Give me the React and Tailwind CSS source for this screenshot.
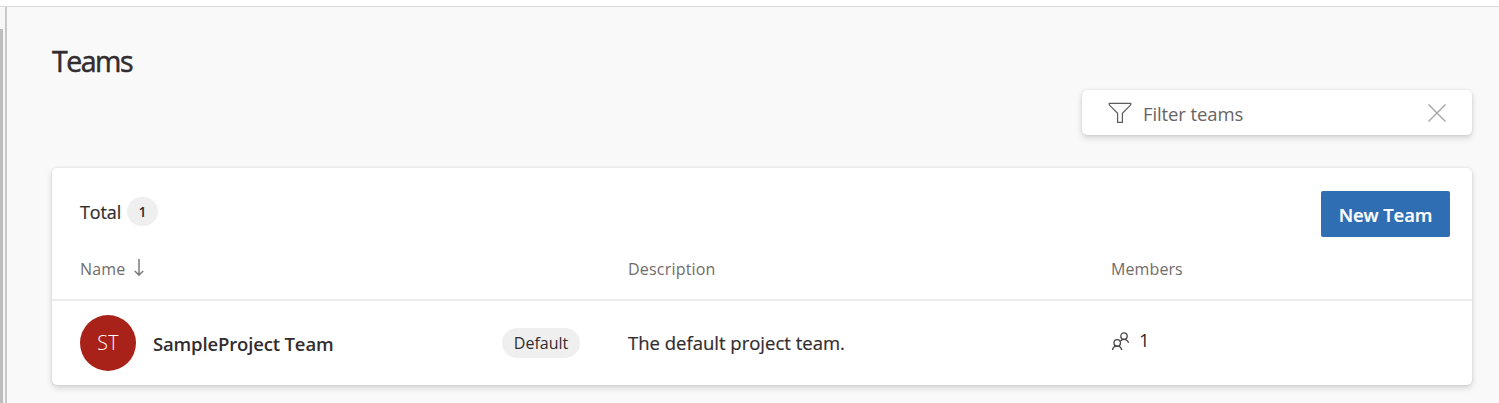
import React from "react";

function FilterIcon() {
  return (
    <svg width="24" height="22" viewBox="0 0 24 22" fill="none" stroke="#605b5b" strokeWidth="1.2" className="shrink-0">
      <path d="M1.2 1.3H22.8V2.8L14.4 11.3V20.4H9.6V11.3L1.2 2.8Z" />
    </svg>
  );
}

function CloseIcon() {
  return (
    <svg width="18" height="18" viewBox="0 0 18 18" fill="none" stroke="#a5a3a3" strokeWidth="1.3" className="shrink-0">
      <path d="M0.5 0.5L17.5 17.5M17.5 0.5L0.5 17.5" />
    </svg>
  );
}

function SortIcon() {
  return (
    <svg width="10" height="17" viewBox="0 0 10 17" fill="none" stroke="#7d7979" strokeWidth="1.5" className="shrink-0">
      <path d="M5 0V16M0.8 12L5 16.1L9.2 12" />
    </svg>
  );
}

function PeopleIcon() {
  return (
    <svg width="19" height="19" viewBox="0 0 19 19" fill="none" stroke="#494545" strokeWidth="1.3" className="shrink-0">
      <circle cx="13" cy="4.1" r="3.2" />
      <path d="M9.3 9.3C10 8 11.3 7.4 13 7.4C15.2 7.4 16.8 8.6 17.6 10.9" />
      <circle cx="6.2" cy="10.9" r="3.2" />
      <path d="M1.4 18C1.9 15.5 3.6 14.1 6.2 14.1C8.6 14.1 10.2 15.5 10.8 18" />
    </svg>
  );
}

export default function App() {
  return (
    <div className="flex h-[403px] w-[1499px] flex-col overflow-hidden bg-[#f9f9f9] font-['Open_Sans','Noto_Sans',sans-serif] text-[#322c2e]">
      <div className="h-[7px] shrink-0 border-b border-[#dadada] bg-white" />
      <div className="flex min-h-0 flex-1">
        <div className="flex w-[7px] shrink-0 border-r-2 border-[#c9c9c9] bg-[#f7f7f7] pt-[22px]">
          <div className="w-[3px] bg-[#bdbdbd]" />
        </div>
        <main className="flex flex-1 flex-col pl-[45px] pr-[27px]">
          <h1 className="mt-[34px] h-10 text-[28.5px] leading-10 tracking-[-1.5px] [-webkit-text-stroke:0.5px_#322c2e]">Teams</h1>
          <div className="mt-[9px] flex h-[45px] w-[390px] shrink-0 items-center self-end rounded-[5px] bg-white pl-[26px] pr-[26px] shadow-[0_3px_6px_rgba(0,0,0,0.15),0_0_3px_rgba(0,0,0,0.1)]">
            <FilterIcon />
            <span className="ml-[11px] mt-[2px] flex-1 text-[18.5px] leading-6 tracking-[-0.1px] text-[#686363]">Filter teams</span>
            <CloseIcon />
          </div>
          <section className="mt-[33px] h-[217px] w-[1420px] shrink-0 rounded-[5px] bg-white shadow-[0_3px_6px_rgba(0,0,0,0.15),0_0_3px_rgba(0,0,0,0.1)]">
            <div className="flex h-[78px] items-start pl-7 pr-[22px]">
              <span className="mt-[32px] w-[47px] whitespace-nowrap text-[18px] leading-6 tracking-[-0.1px] [-webkit-text-stroke:0.2px_#322c2e]">Total</span>
              <span className="mt-[29px] flex h-[29px] w-[31px] items-center justify-center rounded-full bg-[#efefef] text-[14px] font-semibold">1</span>
              <button className="ml-auto mt-[23px] h-[46px] w-[129px] rounded-[2px] bg-[#2f6eb3] pt-[2px] text-[18.5px] font-semibold tracking-[-0.1px] text-white [-webkit-text-stroke:0.2px_white]">New Team</button>
            </div>
            <div className="grid h-[55px] grid-cols-[548px_483px_1fr] border-b-2 border-[#ebebeb] pl-7 pt-[11px] text-[16px] leading-6 text-[#716c6c]">
              <div className="flex items-start gap-[8px]">
                <span className="w-[46px] whitespace-nowrap tracking-[0.15px]">Name</span>
                <span className="mt-[2px]"><SortIcon /></span>
              </div>
              <span className="tracking-[0.2px]">Description</span>
              <span className="tracking-[0.1px]">Members</span>
            </div>
            <div className="grid h-[84px] grid-cols-[548px_483px_1fr] items-center pl-7">
              <div className="flex items-center">
                <span className="flex size-[56px] items-center justify-center rounded-full bg-[#a92219] text-[19.5px] font-light tracking-[0.3px] text-white">ST</span>
                <span className="ml-[17px] mt-[2px] whitespace-nowrap text-[18.5px] font-semibold tracking-[-0.15px]">SampleProject Team</span>
                <span className="ml-auto mr-12 flex h-[30px] w-[78px] items-center justify-center rounded-full bg-[#efefef] text-[16px]">Default</span>
              </div>
              <span className="whitespace-nowrap text-[18.5px] [-webkit-text-stroke:0.2px_#322c2e]">The default project team.</span>
              <div className="flex items-center gap-[9px]">
                <span className="-mt-[3px]"><PeopleIcon /></span>
                <span className="mt-[-7px] text-[18.5px]">1</span>
              </div>
            </div>
          </section>
        </main>
      </div>
    </div>
  );
}
